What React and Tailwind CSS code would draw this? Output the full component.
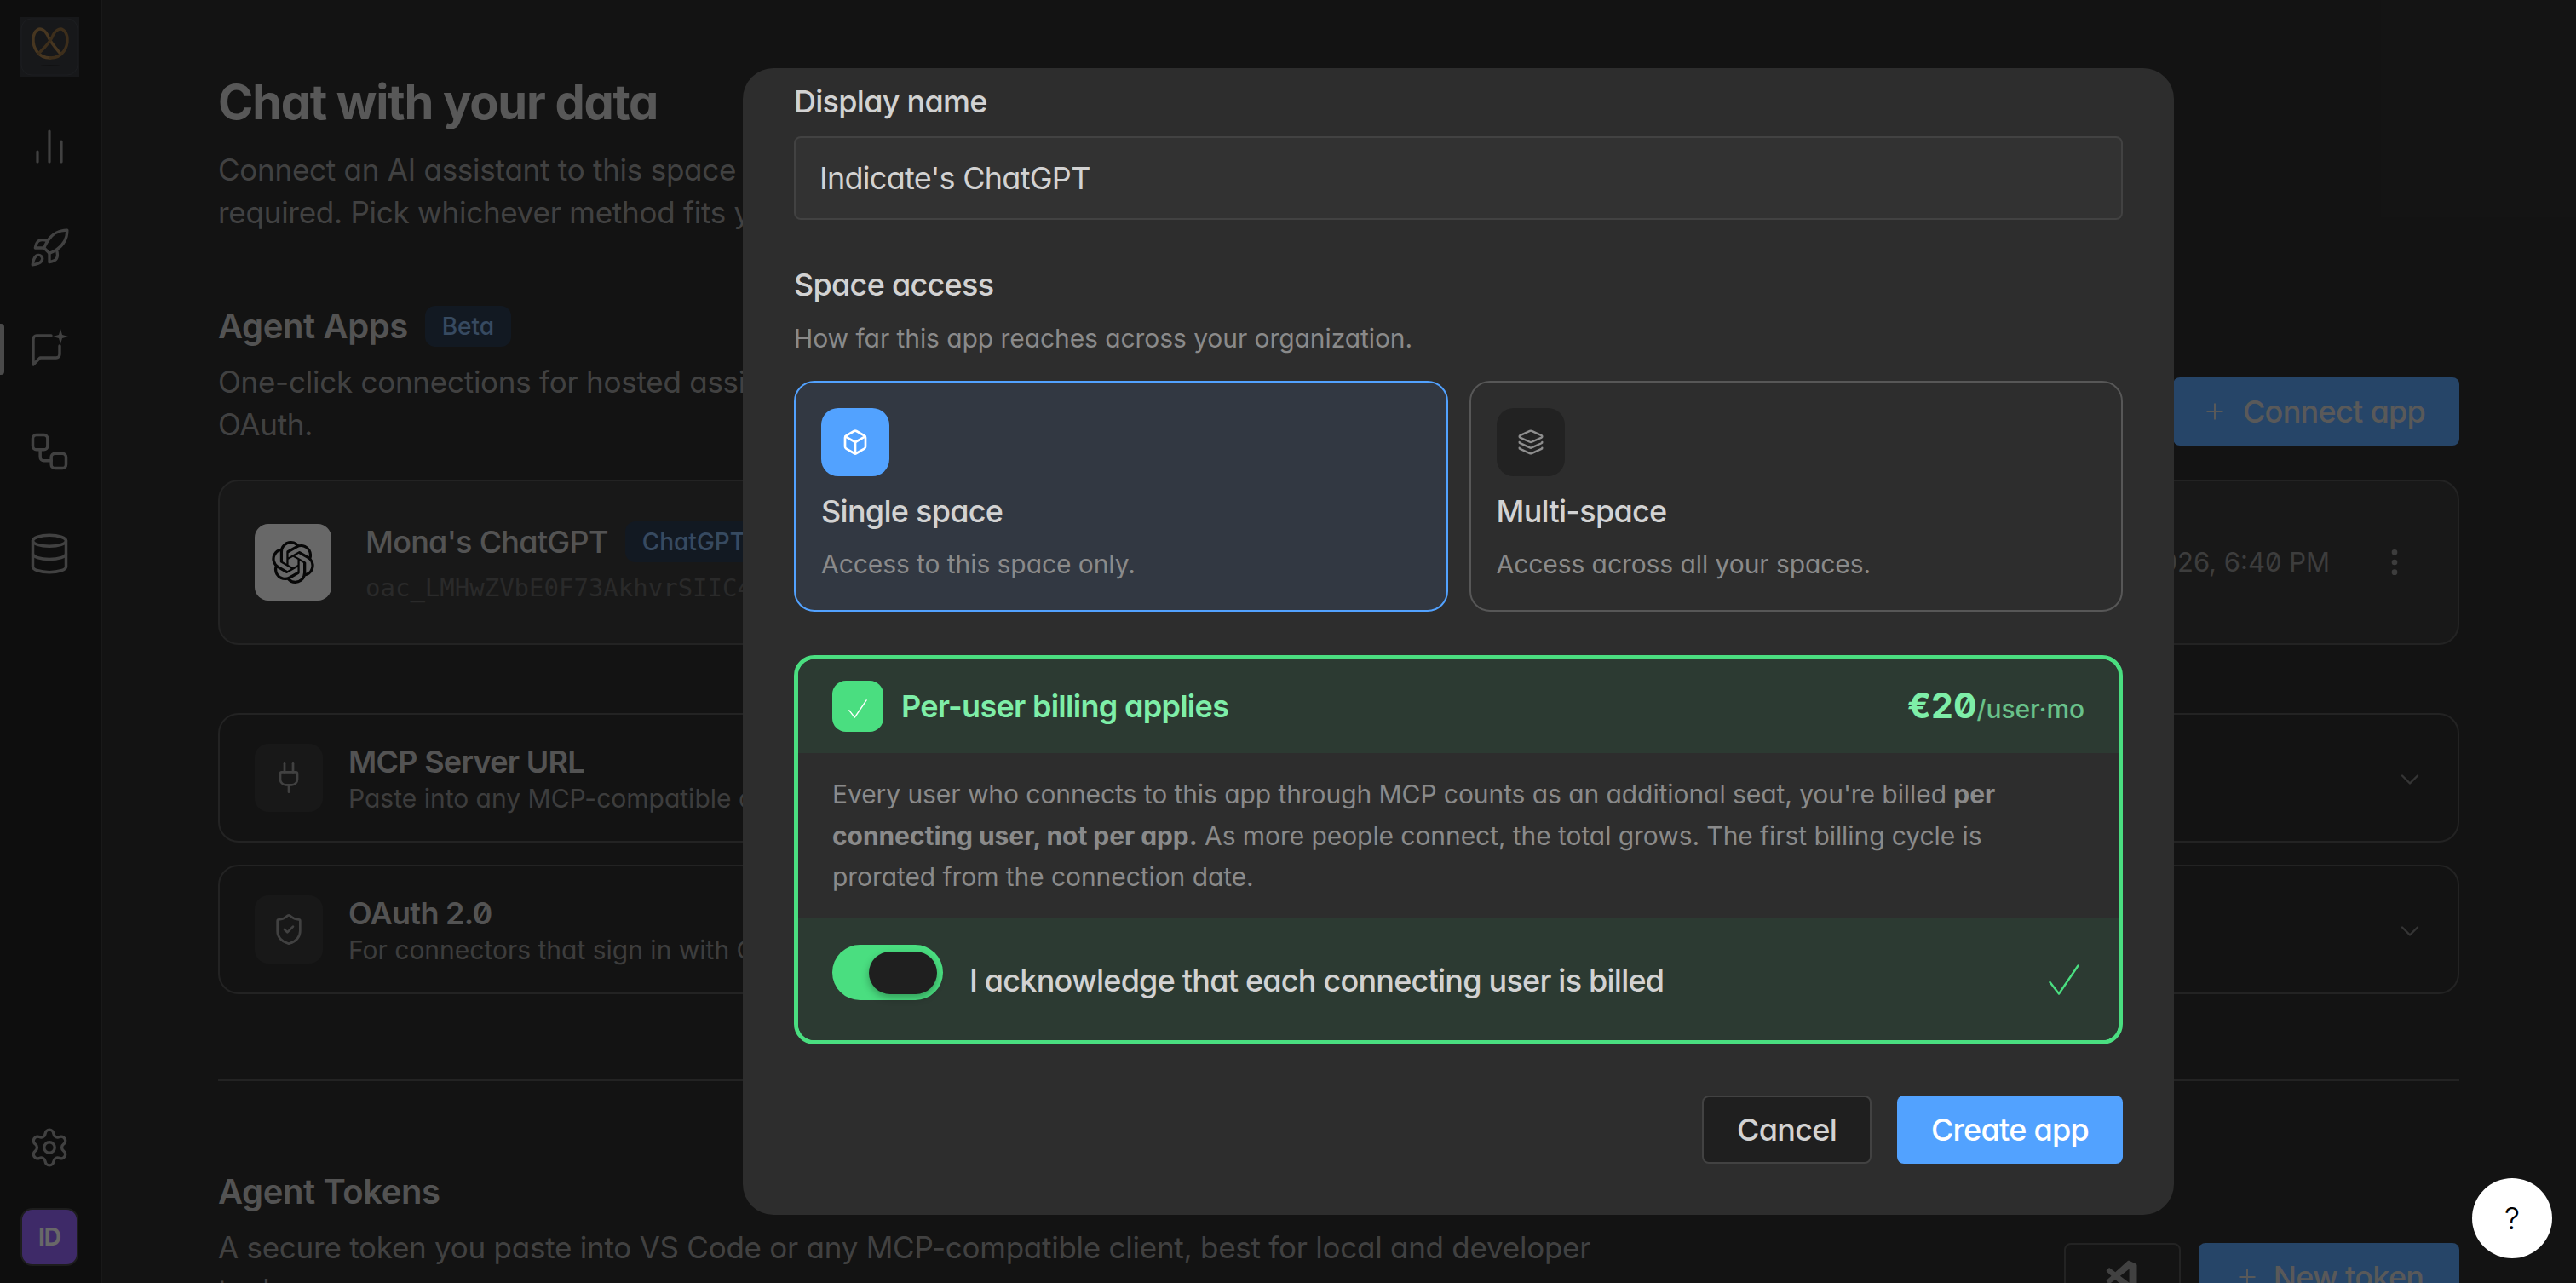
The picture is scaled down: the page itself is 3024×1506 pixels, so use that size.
import React from "react";
import { Box, ChartNoAxesColumn, ChevronDown, Database, EllipsisVertical, Layers, Plug, Plus, Rocket, Settings, ShieldCheck, Workflow } from "lucide-react";
import { SiOpenai } from "react-icons/si";
import { VscVscode } from "react-icons/vsc";

const PretzelLogo = () => (
  <div className="w-[70px] h-[70px] bg-[#2a2d33] flex items-center justify-center">
    <svg width="70" height="70" viewBox="0 0 70 70" fill="none">
      <rect x="2" y="2" width="66" height="66" rx="12" stroke="#44474e" strokeWidth="0.6" />
      <path d="M48 43C43 37 38 32 34 24C31 16 25 12 21 15C15 19 14 31 20 40C24 46 30 48 36 48" stroke="#a87c42" strokeWidth="3.400" strokeLinecap="round" />
      <path d="M22 43C28 37 34 32 38 24C41 16 47 12 51 15C57 19 58 31 52 40C48 46 42 48 36 48" stroke="#8f6835" strokeWidth="3.400" strokeLinecap="round" />
      <ellipse cx="36" cy="57" rx="11" ry="1" fill="#1c1d20" />
    </svg>
  </div>
);

const ChatSparkle = () => (
  <svg width="44" height="44" viewBox="0 0 44 44" fill="none" stroke="currentColor" strokeWidth="3.400" strokeLinecap="round" strokeLinejoin="round">
    <path d="M24 8H7a4 4 0 0 0-4 4v30l8-8h19a4 4 0 0 0 4-4V20" />
    <path d="M35 0l2 7 7 2-7 2-2 7-2-7-7-2 7-2z" fill="currentColor" stroke="none" />
  </svg>
);

const ThinCheck = ({ className }) => (
  <svg className={className} viewBox="0 0 24 24" fill="none" stroke="currentColor" strokeWidth="1.600" strokeLinecap="round" strokeLinejoin="round">
    <polyline points="1,14 8,23 23,1" />
  </svg>
);

const Sidebar = () => (
  <aside className="w-[120px] shrink-0 h-full bg-[#131313] border-r-2 border-[#303030] flex flex-col items-center relative">
    <div className="pt-[20px] pr-[2px]">
      <PretzelLogo />
    </div>
    <div className="flex flex-col items-center gap-[70px] mt-[58px] text-[#9a9a9a] pr-[2px]">
      <ChartNoAxesColumn size={48} strokeWidth={1.6} />
      <Rocket size={50} strokeWidth={1.6} />
      <ChatSparkle />
      <Workflow size={52} strokeWidth={1.6} className="mt-[4px]" />
      <Database size={52} strokeWidth={1.6} className="-mt-[2px]" />
    </div>
    <div className="absolute left-0 top-[380px] w-[5px] h-[60px] rounded-r bg-[#b0b0b0]" />
    <div className="mt-auto flex flex-col items-center pb-[20px] pr-[2px]">
      <Settings size={50} strokeWidth={1.6} className="text-[#9a9a9a]" />
      <div className="mt-[46px] w-[68px] h-[68px] rounded-[14px] bg-[#925dff] border-2 border-[#3a3a3a] flex items-center justify-center text-white text-[28px] font-bold tracking-[-1px]">ID</div>
    </div>
  </aside>
);

const MethodRow = ({ icon, title, sub }) => (
  <div className="h-[152px] rounded-[24px] border-2 border-[#4a4a4a] flex items-center pl-[41px] pr-[38px]">
    <div className="w-[80px] h-[80px] rounded-[16px] bg-[#2d2d2d] flex items-center justify-center text-[#9a9a9a]">{icon}</div>
    <div className="ml-[30px] flex-1 pt-[2px]">
      <div className="text-[36px] leading-[44px] font-semibold tracking-[-0.72px] text-[#c8c8c8]">{title}</div>
      <div className="text-[30px] leading-[40px] mt-[1px] text-[#8e8e8e]">{sub}</div>
    </div>
    <ChevronDown size={36} strokeWidth={1.6} className="text-[#7a7a7a] mt-[4px]" />
  </div>
);

const Background = () => (
  <main className="flex-1 h-full pl-[136px] pr-[137px] pt-[86px]">
    <h1 className="text-[56px] leading-[68px] font-bold tracking-[-1.3px] text-[#d4d4d4]">Chat with your data</h1>
    <p className="mt-[20px] text-[35px] leading-[50px] tracking-[-0.25px] text-[#9a9a9a]">
      Connect an AI assistant to this space so your team can ask questions in plain language, no code
      <br />
      required. Pick whichever method fits your workflow.
    </p>

    <div className="mt-[85px] flex items-end justify-between">
      <div>
        <div className="flex items-center gap-[20px]">
          <h2 className="text-[40px] leading-[48px] font-semibold tracking-[-0.4px] text-[#c8c8c8]">Agent Apps</h2>
          <span className="w-[101px] h-[48px] rounded-[12px] bg-[#1e3048] text-[#7fb0ea] text-[28px] flex items-center justify-center font-medium">Beta</span>
        </div>
        <p className="mt-[16px] w-[1700px] text-[35px] leading-[50px] tracking-[-0.25px] text-[#9a9a9a]">
          One-click connections for hosted assistants like ChatGPT and Claude, signed in securely through
          <br />
          OAuth.
        </p>
      </div>
      <button className="h-[80px] w-[336px] rounded-[8px] bg-[#52a2ff] text-[#d8d8d8] text-[36px] font-medium tracking-[-0.72px] flex items-center justify-end pr-[40px] gap-[18px]">
        <Plus size={30} strokeWidth={1.6} />
        Connect app
      </button>
    </div>

    <div className="mt-[40px] h-[194px] rounded-[24px] border-2 border-[#4a4a4a] bg-[#2e2e2e] flex items-center pl-[41px] pr-[54px]">
      <div className="w-[90px] h-[90px] rounded-[16px] bg-white flex items-center justify-center text-black">
        <SiOpenai size={50} />
      </div>
      <div className="ml-[40px] flex-1">
        <div className="flex items-center gap-[20px]">
          <span className="text-[36px] leading-[48px] font-medium tracking-[-0.72px] text-[#c8c8c8]">Mona's ChatGPT</span>
          <span className="h-[48px] px-[20px] rounded-[12px] bg-[#1e3048] text-[#7fb0ea] text-[28px] flex items-center font-medium">ChatGPT</span>
        </div>
        <div className="mt-[12px] text-[29px] leading-[36px] text-[#5c5c5c] font-['DejaVu_Sans_Mono',monospace]">oac_LMHwZVbE0F73AkhvrSIIC4d91x</div>
      </div>
      <span className="text-[31px] text-[#8e8e8e]">Created Jan 14, 2026, 6:40 PM</span>
      <EllipsisVertical size={40} strokeWidth={2} className="ml-[56px] text-[#8e8e8e]" />
    </div>

    <div className="mt-[80px] flex flex-col gap-[26px]">
      <MethodRow icon={<Plug size={40} strokeWidth={1.6} />} title="MCP Server URL" sub="Paste into any MCP-compatible client to get started." />
      <MethodRow icon={<ShieldCheck size={40} strokeWidth={1.6} />} title="OAuth 2.0" sub="For connectors that sign in with OAuth instead of a token." />
    </div>

    <div className="mt-[100px] h-[2px] bg-[#4a4a4a]" />

    <div className="mt-[106px] flex items-end justify-between">
      <div>
        <h2 className="text-[40px] leading-[48px] font-semibold tracking-[-0.4px] text-[#c8c8c8]">Agent Tokens</h2>
        <p className="mt-[16px] w-[1700px] text-[35px] leading-[50px] tracking-[-0.25px] text-[#9a9a9a]">
          A secure token you paste into VS Code or any MCP-compatible client, best for local and developer
          <br />
          tools.
        </p>
      </div>
      <div className="flex gap-[21px]">
        <button className="w-[137px] h-[80px] rounded-[8px] border-2 border-[#4a4a4a] bg-[#232323] flex items-center justify-center text-[#9a9a9a]">
          <VscVscode size={44} />
        </button>
        <button className="w-[306px] h-[80px] rounded-[8px] bg-[#52a2ff] text-[#d8d8d8] text-[36px] font-medium tracking-[-0.72px] flex items-center justify-center gap-[16px]">
          <Plus size={30} strokeWidth={1.6} />
          New token
        </button>
      </div>
    </div>
  </main>
);

const ScopeCard = ({ active, icon, title, sub }) => (
  <div className={`flex-1 rounded-[24px] border-2 px-[30px] pt-[30px] pb-[34px] ${active ? "border-[#52a2ff] bg-[#323842]" : "border-[#575757]"}`}>
    <div className={`w-[80px] h-[80px] rounded-[20px] flex items-center justify-center ${active ? "bg-[#52a2ff] text-white" : "bg-[#222222] text-[#8e8e8e]"}`}>{icon}</div>
    <div className="mt-[21px] text-[36px] leading-[40px] font-medium tracking-[-0.72px] text-[#d2d2d2]">{title}</div>
    <div className="mt-[22px] text-[30px] leading-[40px] tracking-[-0.07px] text-[#8a8a8a]">{sub}</div>
  </div>
);

const CreateAppModal = () => (
  <div className="absolute inset-0 bg-[#0c0c0c]/62 flex items-center justify-center pl-[400px]">
    <div className="w-[1680px] h-[1346px] rounded-[36px] bg-[#2d2d2d] overflow-hidden px-[60px] pt-[19px]">
      <label className="block text-[36px] leading-[40px] font-medium tracking-[-0.72px] text-[#d2d2d2]">Display name</label>
      <div className="mt-[21px] h-[98px] rounded-[8px] border-2 border-[#424242] bg-[#323232] flex items-center px-[28px] text-[36px] tracking-[-0.72px] text-[#d2d2d2]">Indicate's ChatGPT</div>

      <div className="mt-[56px] text-[36px] leading-[40px] font-medium tracking-[-0.72px] text-[#d2d2d2]">Space access</div>
      <div className="mt-[23px] text-[30px] leading-[40px] tracking-[-0.07px] text-[#8a8a8a]">How far this app reaches across your organization.</div>
      <div className="mt-[30px] flex gap-[25px]">
        <ScopeCard active icon={<Box size={32} strokeWidth={2} />} title="Single space" sub="Access to this space only." />
        <ScopeCard icon={<Layers size={32} strokeWidth={1.8} />} title="Multi-space" sub="Access across all your spaces." />
      </div>

      <div className="mt-[51px] rounded-[24px] border-[5px] border-[#4ade80] overflow-hidden">
        <div className="h-[110px] bg-[#2c3a32] flex items-center justify-between pl-[40px] pr-[40px]">
          <div className="flex items-center gap-[21px]">
            <div className="w-[60px] h-[60px] rounded-[16px] bg-[#4ade80] flex items-center justify-center text-white">
              <ThinCheck className="w-[22px] h-[22px] mt-[6px]" />
            </div>
            <span className="text-[36px] font-semibold tracking-[-0.72px] text-[#7eeea8]">Per-user billing applies</span>
          </div>
          <div className="flex items-baseline text-[#7eeea8]">
            <span className="text-[41px] font-bold">€20</span>
            <span className="text-[30px] font-medium tracking-[-0.1px] opacity-75">/user·mo</span>
          </div>
        </div>
        <div className="h-[194px] px-[40px] pt-[24px] text-[30px] leading-[48.5px] tracking-[-0.07px] text-[#8a8a8a]">
          Every user who connects to this app through MCP counts as an additional seat, you're billed <strong className="font-bold">per connecting user, not per app.</strong> As more people connect, the total grows. The first billing cycle is prorated from the connection date.
        </div>
        <div className="h-[143px] bg-[#2c3a32] flex items-center justify-between pl-[40px] pr-[46px]">
          <div className="flex items-center">
            <div className="w-[130px] h-[65px] mb-[16px] rounded-full bg-[#4ade80] flex items-center justify-end pr-[7px]">
              <div className="w-[80px] h-[50px] rounded-full bg-[#1f1f1f] shadow-[0_4px_10px_rgba(0,0,0,0.3)]" />
            </div>
            <span className="ml-[31px] text-[36px] font-medium tracking-[-0.78px] text-[#d2d2d2] pt-[2px]">I acknowledge that each connecting user is billed</span>
          </div>
          <ThinCheck className="w-[36px] h-[36px] text-[#4ade80]" />
        </div>
      </div>

      <div className="mt-[60px] flex justify-end gap-[30px]">
        <button className="w-[199px] h-[80px] rounded-[8px] border-2 border-[#424242] bg-[#1f1f1f] text-[36px] font-medium tracking-[-0.72px] text-[#d2d2d2]">Cancel</button>
        <button className="w-[265px] h-[80px] rounded-[8px] bg-[#52a2ff] text-[36px] font-medium tracking-[-0.72px] text-white">Create app</button>
      </div>
    </div>
  </div>
);

export default function App() {
  return (
    <div className="relative h-screen w-full overflow-hidden flex bg-[#202020] font-['Inter',sans-serif] [font-feature-settings:'cv11','zero']">
      <Sidebar />
      <Background />
      <CreateAppModal />
      <button className="absolute right-[28px] bottom-[29px] w-[94px] h-[94px] rounded-full bg-white text-black text-[36px] font-light flex items-center justify-center">?</button>
    </div>
  );
}
